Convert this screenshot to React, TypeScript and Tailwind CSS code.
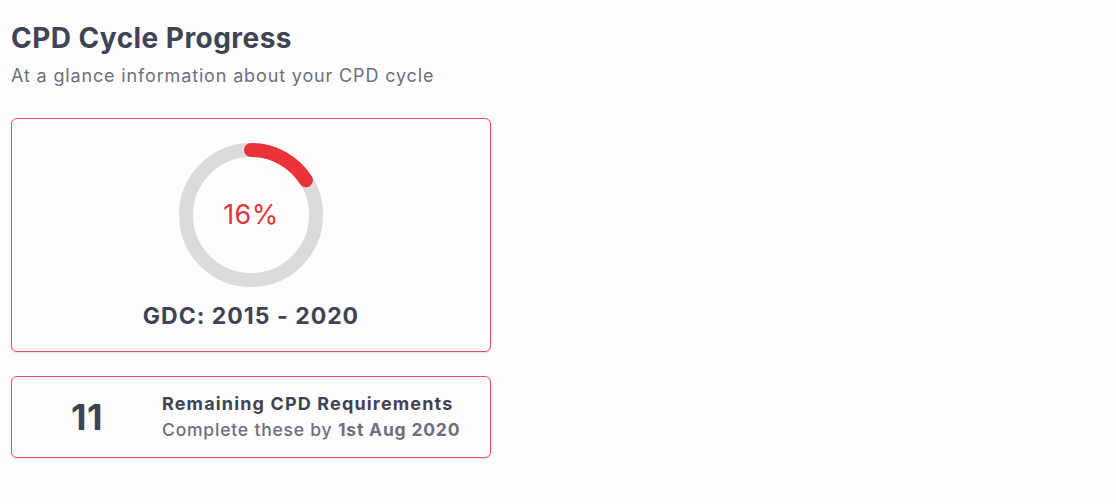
export default function App() {
  const percent = 16;
  const r = 65;
  const circ = 2 * Math.PI * r;

  return (
    <div className="min-h-screen w-full bg-[#fefdfe] font-['Inter','Noto_Sans',sans-serif] text-[#3f4454]">
      <div className="w-[502px] px-[11px] pt-[21px]">
        <h1 className="text-[28px] font-bold leading-[34px] tracking-[0.45px]">CPD Cycle Progress</h1>
        <p className="mt-[10px] text-[18px] leading-[22px] tracking-[0.85px] text-[#6b7080]">
          At a glance information about your CPD cycle
        </p>

        <div className="mt-[31px] flex h-[234px] flex-col items-center rounded-[6px] border border-[#e8505b] bg-[#fffcfd] pt-[23px] shadow-[0_1px_2px_rgba(0,0,0,0.12)]">
          <div className="relative h-[146px] w-[146px]">
            <svg width="146" height="146" viewBox="0 0 146 146">
              <circle cx="73" cy="73" r={r} fill="none" stroke="#dcdbdc" strokeWidth="14" />
              <circle
                cx="73"
                cy="73"
                r={r}
                fill="none"
                stroke="#e93338"
                strokeWidth="14"
                strokeLinecap="round"
                strokeDasharray={`${(circ * percent) / 100} ${circ}`}
                transform="rotate(-90 73 73)"
              />
            </svg>
            <div className="absolute inset-0 flex items-center justify-center text-[27px] tracking-[0.5px] text-[#e93338]">
              {percent}%
            </div>
          </div>
          <div className="mt-[14px] text-[23px] font-bold leading-[28px] tracking-[1px]">GDC: 2015 - 2020</div>
        </div>

        <div className="mt-[24px] flex h-[82px] items-center rounded-[6px] border border-[#e8505b] bg-[#fffcfd] shadow-[0_1px_2px_rgba(0,0,0,0.12)]">
          <div className="w-[150px] text-center text-[36px] font-bold leading-none tracking-[0.5px]">11</div>
          <div className="flex flex-col gap-[4px]">
            <div className="text-[18px] font-bold leading-[22px] tracking-[1.15px]">Remaining CPD Requirements</div>
            <div className="text-[17.5px] font-medium leading-[22px] tracking-[0.8px] text-[#6b7080]">
              Complete these by <span className="font-bold">1st Aug 2020</span>
            </div>
          </div>
        </div>
      </div>
    </div>
  );
}
